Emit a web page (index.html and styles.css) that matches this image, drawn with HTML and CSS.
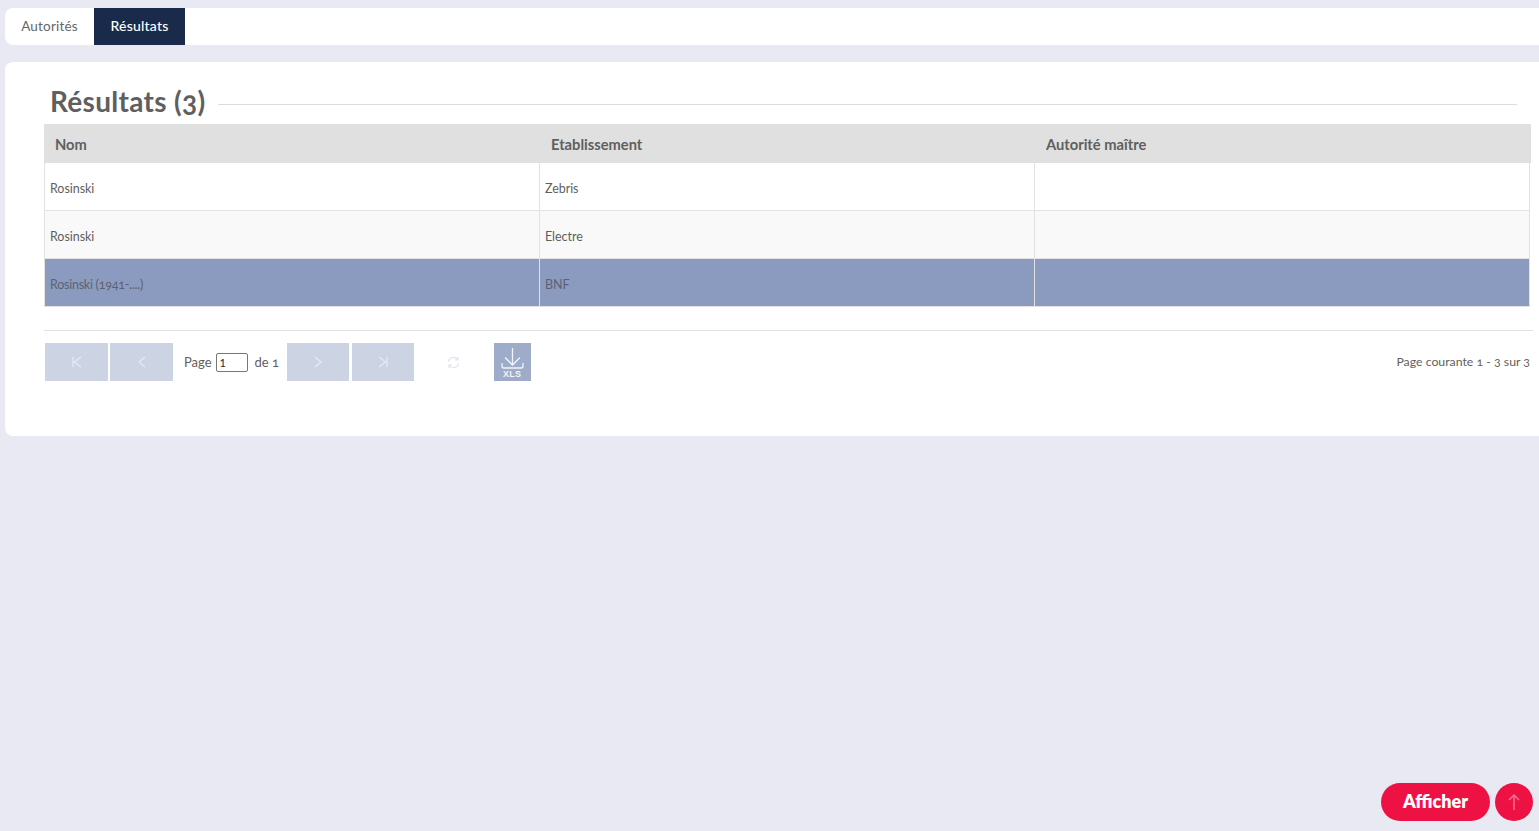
FILE: index.html
```html
<!DOCTYPE html>
<html lang="fr">
<head>
<meta charset="utf-8">
<title>Résultats</title>
<link rel="stylesheet" href="styles.css">
</head>
<body>
<nav class="tabs">
  <a class="tab">Autorités</a>
  <a class="tab tab-active">Résultats</a>
</nav>
<main class="panel">
  <div class="title-row">
    <h2 class="title">Résultats (<span class="onum">3</span>)</h2>
    <div class="title-line"></div>
  </div>
  <div class="grid-head">
    <div class="hcell">Nom</div>
    <div class="hcell">Etablissement</div>
    <div class="hcell">Autorité maître</div>
  </div>
  <div class="grid-body">
    <div class="row"><div class="cell">Rosinski</div><div class="cell">Zebris</div><div class="cell"></div></div>
    <div class="row row-alt"><div class="cell">Rosinski</div><div class="cell">Electre</div><div class="cell"></div></div>
    <div class="row row-sel"><div class="cell"><span class="tight">Rosinski (<span class="onum">1941</span>-....)</span></div><div class="cell">BNF</div><div class="cell"></div></div>
  </div>
  <div class="pager">
    <div class="pager-left">
      <button class="pbtn pbtn-wide"><svg width="14" height="14" viewBox="0 0 14 14"><path d="M3 2v10M11 2 4.500 7 11 12" class="ic"/></svg></button>
      <button class="pbtn pbtn-wide"><svg width="14" height="14" viewBox="0 0 14 14"><path d="M10 2 4 7l6 5" class="ic"/></svg></button>
      <span class="page-label">Page</span>
      <input class="page-input" value="1">
      <span class="page-of">de <span class="onum">1</span></span>
      <button class="pbtn"><svg width="14" height="14" viewBox="0 0 14 14"><path d="m4 2 6 5-6 5" class="ic"/></svg></button>
      <button class="pbtn"><svg width="14" height="14" viewBox="0 0 14 14"><path d="M3 2l6.500 5L3 12M11 2v10" class="ic"/></svg></button>
      <span class="refresh"><svg width="13" height="13" viewBox="0 0 13 13"><path d="M1.500 5.500A5 5 0 0 1 10.500 3.500M11.500 7.500A5 5 0 0 1 2.500 9.500" class="ic-ref"/><path d="M11 1v3H8M2 12V9h3" class="ic-ref"/></svg></span>
      <button class="xls"><svg width="37" height="38" viewBox="0 0 37 38"><path d="M18.500 5v17M11 14.500l7.500 7.500 7.500-7.500M8 20v3a2 2 0 0 0 2 2h17a2 2 0 0 0 2-2v-3" class="ic-xls"/></svg><span class="xls-text">XLS</span></button>
    </div>
    <div class="pager-info">Page courante <span class="onum">1</span> - <span class="onum">3</span> sur <span class="onum">3</span></div>
  </div>
</main>
<div class="floating">
  <button class="show-btn">Afficher</button>
  <button class="top-btn"><svg width="14" height="18" viewBox="0 0 14 18"><path d="M7 17V2M2 7l5-5 5 5" class="ic-top"/></svg></button>
</div>
</body>
</html>
```
FILE: styles.css
```css
* { box-sizing: border-box; }
html, body { height: 100%; }
body {
  margin: 0;
  padding: 8px 0 0 5px;
  background: #e8e9f2;
  font-family: Lato, "Open Sans", sans-serif;
  color: #5f5f5f;
  overflow: hidden;
}
.tabs {
  display: flex;
  height: 37px;
  background: #fff;
  border-radius: 8px 0 0 8px;
  overflow: hidden;
}
.tab {
  display: flex;
  align-items: center;
  justify-content: center;
  width: 89px;
  padding-bottom: 2px;
  font-size: 13.500px;
  letter-spacing: 0.2px;
  color: #666;
}
.tab-active {
  width: 91px;
  background: #1a2a4a;
  color: #fff;
  font-size: 14px;
  font-weight: 500;
}
.panel {
  margin-top: 17px;
  height: 374px;
  background: #fff;
  border-radius: 8px 0 0 8px;
  padding: 0 0 0 39px;
}
.title-row {
  display: flex;
  align-items: center;
  height: 62px;
  padding: 15px 22px 0 7px;
}
.title {
  margin: 0 13px 0 -1px;
  font-size: 28px;
  letter-spacing: 0.3px;
  line-height: 40px;
  font-weight: 700;
  color: #5f5f5f;
  white-space: nowrap;
}
.onum { font-variant-numeric: oldstyle-nums; }
.tight { letter-spacing: -0.25px; }
.title-line { flex: 1; height: 1px; background: #dcdcdc; margin-top: 7px; }
.grid-head {
  display: grid;
  grid-template-columns: 496px 495px 496px;
  width: 1487px;
  height: 39px;
  background: #e0e0e0;
}
.hcell {
  display: flex;
  align-items: center;
  font-size: 14.700px;
  font-weight: 700;
  color: #5f5f5f;
  padding-left: 11px;
}
.grid-body { width: 1486px; }
.row {
  display: grid;
  grid-template-columns: 495px 495px 496px;
  height: 48px;
  background: #fff;
  border-bottom: 1px solid #e2e2e2;
}
.row-alt { background: #f9f9f9; }
.row-sel { background: #8b9bbf; color: #5b6274; }
.cell {
  display: flex;
  align-items: center;
  font-size: 12.500px;
  letter-spacing: -0.05px;
  padding: 4px 0 0 5px;
  border-left: 1px solid #e2e2e2;
}
.cell:last-child { border-right: 1px solid #e2e2e2; }
.pager {
  display: flex;
  justify-content: space-between;
  align-items: center;
  width: 1489px;
  margin-top: 23px;
  border-top: 1px solid #e2e2e2;
  padding-top: 12px;
}
.pager-left { display: flex; align-items: center; margin-left: 1px; }
.pbtn {
  display: flex;
  align-items: center;
  justify-content: center;
  width: 62px;
  height: 38px;
  margin-right: 3px;
  padding: 0;
  border: 0;
  background: #ccd4e4;
}
.pbtn-wide { width: 63px; margin-right: 2px; }
.ic { fill: none; stroke: #e6eaf2; stroke-width: 1.300; }
.ic-ref { fill: none; stroke: #dde2ee; stroke-width: 1.200; }
.ic-xls { fill: none; stroke: #f2f4f9; stroke-width: 1.300; }
.ic-top { fill: none; stroke: #f7708f; stroke-width: 1.500; }
.page-label { font-size: 13px; margin: 0 4px 0 9px; }
.page-input {
  width: 32px;
  height: 19px;
  padding: 0 3px;
  border: 1px solid #767676;
  border-radius: 2px;
  font: 11px Lato, sans-serif;
  color: #222;
}
.page-of { width: 32px; font-size: 13px; margin-left: 7px; margin-top: -1px; }
.refresh { display: flex; margin: 1px 34px 0 30px; }
.xls {
  position: relative;
  width: 37px;
  height: 38px;
  padding: 0;
  border: 0;
  background: #9eabc9;
}
.xls svg { display: block; }
.xls-text {
  position: absolute;
  left: 0;
  right: 0;
  bottom: 2px;
  font: 700 9px/9px "Liberation Sans", sans-serif;
  letter-spacing: 0.3px;
  color: #f2f4f9;
  text-align: center;
}
.pager-info { font-size: 12.300px; margin: -2px 3px 0 0; }
.floating {
  position: fixed;
  right: 6px;
  bottom: 10px;
  display: flex;
  gap: 5px;
}
.show-btn {
  width: 109px;
  height: 38px;
  border: 0;
  border-radius: 19px;
  background: #ee1144;
  color: #fff;
  font: 800 18px Lato, sans-serif;
  padding: 0 0 3px;
}
.top-btn {
  display: flex;
  align-items: center;
  justify-content: center;
  width: 38px;
  height: 38px;
  padding: 0;
  border: 0;
  border-radius: 50%;
  background: #ee1144;
}
```
